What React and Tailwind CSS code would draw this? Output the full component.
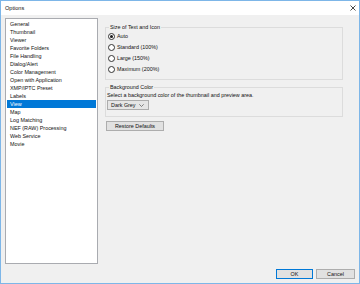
import React from "react";

const items = [
  "General",
  "Thumbnail",
  "Viewer",
  "Favorite Folders",
  "File Handling",
  "Dialog/Alert",
  "Color Management",
  "Open with Application",
  "XMP/IPTC Preset",
  "Labels",
  "View",
  "Map",
  "Log Matching",
  "NEF (RAW) Processing",
  "Web Service",
  "Movie",
];

const radios = ["Auto", "Standard (100%)", "Large (150%)", "Maximum (200%)"];

function Radio({ checked }) {
  return (
    <span className="w-[7px] h-[7px] rounded-full border border-[#333333] bg-white flex items-center justify-center shrink-0">
      {checked && <span className="w-[3px] h-[3px] rounded-full bg-[#1a1a1a]" />}
    </span>
  );
}

export default function App() {
  return (
    <div
      className="w-[360px] h-[284px] border border-[#7db6e8] flex flex-col bg-[#f0f0f0] text-[#111111] text-[5.4px] overflow-hidden"
      style={{ fontFamily: '"Liberation Sans", Arial, sans-serif' }}
    >
      <div className="h-[14px] bg-white flex items-center justify-between pl-[4px] pr-[3px] shrink-0">
        <span className="text-[5.6px]">Options</span>
        <svg width="6" height="6" viewBox="0 0 6 6">
          <path d="M0.5 0.5 L5.5 5.5 M5.5 0.5 L0.5 5.5" stroke="#333" strokeWidth="0.9" />
        </svg>
      </div>
      <div className="flex-1 flex flex-col px-[4px] pt-[3px] pb-[4px]">
        <div className="flex h-[246px]">
          <div className="w-[93px] h-full border border-[#a9abb0] bg-white pt-[1px] px-[1px] flex flex-col">
            {items.map((it) => (
              <div
                key={it}
                className={
                  "h-[8px] leading-[8px] pl-[3px] whitespace-nowrap " +
                  (it === "View" ? "bg-[#0078d7] text-white" : "")
                }
              >
                {it}
              </div>
            ))}
          </div>
          <div className="ml-[7px] w-[238px] flex flex-col">
            <fieldset className="mt-[6px] border border-[#dcdcdc] pl-[2px] pb-[4px]">
              <legend className="ml-[1px] px-[1px] leading-[6px] h-[6px]">Size of Text and Icon</legend>
              <div className="flex flex-col pt-[1px]">
                {radios.map((r, i) => (
                  <div key={r} className="h-[11px] flex items-center gap-[2px]">
                    <Radio checked={i === 0} />
                    <span>{r}</span>
                  </div>
                ))}
              </div>
            </fieldset>
            <fieldset className="mt-[4px] border border-[#dcdcdc] pl-[1px] pb-[6px]">
              <legend className="ml-[2px] px-[1px] leading-[6px] h-[6px]">Background Color</legend>
              <div className="h-[8px] leading-[8px] mt-[1px] whitespace-nowrap">
                Select a background color of the thumbnail and preview area.
              </div>
              <div className="mt-[1px] w-[42px] h-[10px] border border-[#acacac] bg-[#e5e5e5] flex items-center justify-between pl-[3px] pr-[4px]">
                <span>Dark Grey</span>
                <svg width="5" height="3" viewBox="0 0 5 3">
                  <path d="M0.3 0.3 L2.5 2.5 L4.7 0.3" stroke="#555" strokeWidth="0.7" fill="none" />
                </svg>
              </div>
            </fieldset>
            <div className="mt-[4px] ml-[1px]">
              <button className="w-[58px] h-[10px] border border-[#adadad] bg-[#e1e1e1] flex items-center justify-center">
                Restore Defaults
              </button>
            </div>
          </div>
        </div>
        <div className="mt-[5px] flex justify-end gap-[3px]">
          <button className="w-[37px] h-[10px] border border-[#0078d7] bg-[#e1e1e1] flex items-center justify-center">
            OK
          </button>
          <button className="w-[39px] h-[10px] border border-[#adadad] bg-[#e1e1e1] flex items-center justify-center">
            Cancel
          </button>
        </div>
      </div>
    </div>
  );
}
